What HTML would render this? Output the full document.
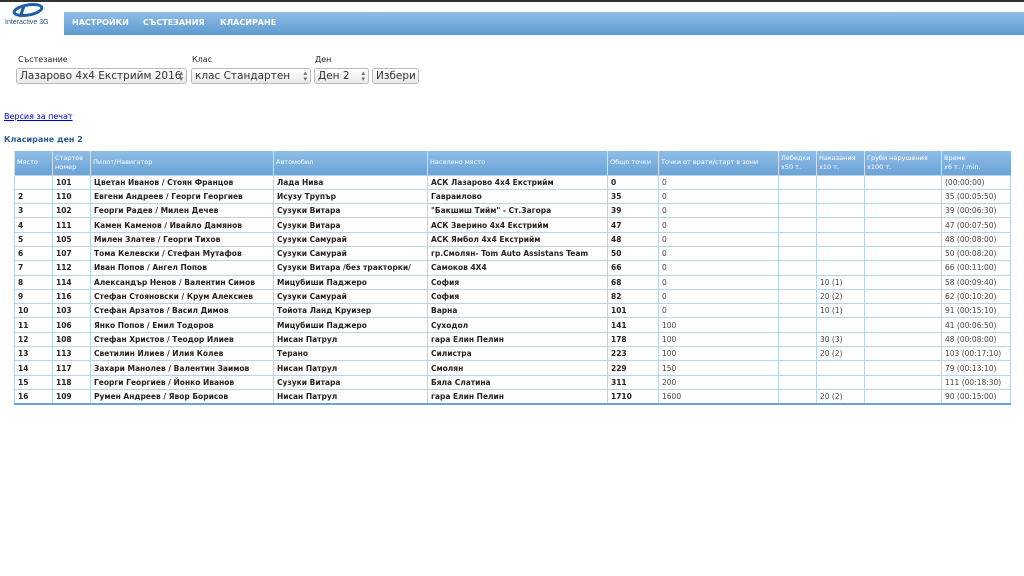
<!DOCTYPE html>
<html><head><meta charset="utf-8"><style>
*{box-sizing:border-box}
body{margin:0;width:1024px;height:576px;background:#fff;font-family:"DejaVu Sans","Liberation Sans",sans-serif;overflow:hidden;position:relative;color:#222}
.top{position:absolute;left:0;top:0;width:1024px;height:2px;background:#333}
.nav{position:absolute;left:64px;top:12px;width:960px;height:23px;background:linear-gradient(#8fbde6,#5d9ad0);}
.nav span{position:absolute;top:6px;color:#fff;font-weight:bold;font-size:8px}
.logo{position:absolute;left:4px;top:2px}
.lbl{position:absolute;font-size:8px;color:#222}
.sel{position:absolute;top:68px;height:16px;border:1px solid #bbb;border-radius:3px;background:linear-gradient(#fff,#e8e8e8);font-size:10.5px;padding:1px 3px;color:#333;white-space:nowrap;overflow:hidden}
.sel i{position:absolute;right:3px;top:1px;font-style:normal;font-size:7px;line-height:6px;color:#666;background:transparent}
a{position:absolute;left:4px;top:112px;font-size:8px;color:#00c;text-decoration:underline}
h4{position:absolute;left:4px;top:135px;margin:0;font-size:8px;color:#2a5b94;font-weight:bold}
table{position:absolute;left:14px;top:151px;width:996px;border-collapse:collapse;font-size:7.5px;table-layout:fixed}
th{background:linear-gradient(#8fbde6,#6aa3d6);color:#fff;font-weight:normal;text-align:left;height:24px;padding:0 2px;border-left:1px solid #cfe0f0;font-size:6.5px;line-height:9px;vertical-align:middle}
td{height:14.3px;padding:0 3px;border:1px solid #b8d3ec;white-space:nowrap;overflow:hidden;font-size:7.5px}
td.b{font-weight:bold}
td.n{color:#444}
tr:last-child td{border-bottom:2px solid #6aa3d6}
</style></head><body>
<div class="top"></div>
<svg class="logo" width="60" height="26" viewBox="0 0 60 26"><ellipse cx="24" cy="8" rx="14" ry="5" fill="none" stroke="#1d5ea6" stroke-width="3" transform="rotate(-10 24 8)"/><path d="M20 4 L16 15" stroke="#1d5ea6" stroke-width="3"/><text x="1" y="22" font-size="7" fill="#1d4f8a" font-family="Liberation Sans">Interactive 3G</text></svg>
<div class="nav"><span style="left:8px">НАСТРОЙКИ</span><span style="left:79px">СЪСТЕЗАНИЯ</span><span style="left:156px">КЛАСИРАНЕ</span></div>
<div class="lbl" style="left:18px;top:55px">Състезание</div>
<div class="lbl" style="left:192px;top:55px">Клас</div>
<div class="lbl" style="left:315px;top:55px">Ден</div>
<div class="sel" style="left:16px;width:171px">Лазарово 4х4 Екстрийм 2016<i>▴<br>▾</i></div>
<div class="sel" style="left:191px;width:120px">клас Стандартен<i>▴<br>▾</i></div>
<div class="sel" style="left:314px;width:55px">Ден 2<i>▴<br>▾</i></div>
<div class="sel" style="left:372px;width:47px">Избери</div>
<a>Версия за печат</a>
<h4>Класиране ден 2</h4>
<table>
<colgroup><col style="width:38px"><col style="width:38px"><col style="width:183px"><col style="width:154px"><col style="width:180px"><col style="width:51px"><col style="width:120px"><col style="width:38px"><col style="width:48px"><col style="width:77px"><col style="width:69px"></colgroup>
<tr><th>Място</th><th>Стартов<br>номер</th><th>Пилот/Навигатор</th><th>Автомобил</th><th>Населено място</th><th>Общо точки</th><th>Точки от врати/старт в зони</th><th>Лебедки<br>x50 т.</th><th>Наказания<br>x10 т.</th><th>Груби нарушения<br>x100 т.</th><th>Време<br>x6 т. / min.</th></tr>
<tr><td class="b"></td><td class="b">101</td><td class="b">Цветан Иванов / Стоян Францов</td><td class="b">Лада Нива</td><td class="b">АСК Лазарово 4х4 Екстрийм</td><td class="b">0</td><td class="n">0</td><td></td><td></td><td></td><td class="n">(00:00:00)</td></tr>
<tr><td class="b">2</td><td class="b">110</td><td class="b">Евгени Андреев / Георги Георгиев</td><td class="b">Исузу Трупър</td><td class="b">Гавраилово</td><td class="b">35</td><td class="n">0</td><td></td><td></td><td></td><td class="n">35 (00:05:50)</td></tr>
<tr><td class="b">3</td><td class="b">102</td><td class="b">Георги Радев / Милен Дечев</td><td class="b">Сузуки Витара</td><td class="b">"Бакшиш Тийм" - Ст.Загора</td><td class="b">39</td><td class="n">0</td><td></td><td></td><td></td><td class="n">39 (00:06:30)</td></tr>
<tr><td class="b">4</td><td class="b">111</td><td class="b">Камен Каменов / Ивайло Дамянов</td><td class="b">Сузуки Витара</td><td class="b">АСК Зверино 4х4 Екстрийм</td><td class="b">47</td><td class="n">0</td><td></td><td></td><td></td><td class="n">47 (00:07:50)</td></tr>
<tr><td class="b">5</td><td class="b">105</td><td class="b">Милен Златев / Георги Тихов</td><td class="b">Сузуки Самурай</td><td class="b">АСК Ямбол 4х4 Екстрийм</td><td class="b">48</td><td class="n">0</td><td></td><td></td><td></td><td class="n">48 (00:08:00)</td></tr>
<tr><td class="b">6</td><td class="b">107</td><td class="b">Тома Келевски / Стефан Мутафов</td><td class="b">Сузуки Самурай</td><td class="b">гр.Смолян- Tom Auto Assistans Team</td><td class="b">50</td><td class="n">0</td><td></td><td></td><td></td><td class="n">50 (00:08:20)</td></tr>
<tr><td class="b">7</td><td class="b">112</td><td class="b">Иван Попов / Ангел Попов</td><td class="b">Сузуки Витара /без тракторки/</td><td class="b">Самоков 4Х4</td><td class="b">66</td><td class="n">0</td><td></td><td></td><td></td><td class="n">66 (00:11:00)</td></tr>
<tr><td class="b">8</td><td class="b">114</td><td class="b">Александър Ненов / Валентин Симов</td><td class="b">Мицубиши Паджеро</td><td class="b">София</td><td class="b">68</td><td class="n">0</td><td></td><td class="n">10 (1)</td><td></td><td class="n">58 (00:09:40)</td></tr>
<tr><td class="b">9</td><td class="b">116</td><td class="b">Стефан Стояновски / Крум Алексиев</td><td class="b">Сузуки Самурай</td><td class="b">София</td><td class="b">82</td><td class="n">0</td><td></td><td class="n">20 (2)</td><td></td><td class="n">62 (00:10:20)</td></tr>
<tr><td class="b">10</td><td class="b">103</td><td class="b">Стефан Арзатов / Васил Димов</td><td class="b">Тойота Ланд Круизер</td><td class="b">Варна</td><td class="b">101</td><td class="n">0</td><td></td><td class="n">10 (1)</td><td></td><td class="n">91 (00:15:10)</td></tr>
<tr><td class="b">11</td><td class="b">106</td><td class="b">Янко Попов / Емил Тодоров</td><td class="b">Мицубиши Паджеро</td><td class="b">Суходол</td><td class="b">141</td><td class="n">100</td><td></td><td></td><td></td><td class="n">41 (00:06:50)</td></tr>
<tr><td class="b">12</td><td class="b">108</td><td class="b">Стефан Христов / Теодор Илиев</td><td class="b">Нисан Патрул</td><td class="b">гара Елин Пелин</td><td class="b">178</td><td class="n">100</td><td></td><td class="n">30 (3)</td><td></td><td class="n">48 (00:08:00)</td></tr>
<tr><td class="b">13</td><td class="b">113</td><td class="b">Светилин Илиев / Илия Колев</td><td class="b">Терано</td><td class="b">Силистра</td><td class="b">223</td><td class="n">100</td><td></td><td class="n">20 (2)</td><td></td><td class="n">103 (00:17:10)</td></tr>
<tr><td class="b">14</td><td class="b">117</td><td class="b">Захари Манолев / Валентин Заимов</td><td class="b">Нисан Патрул</td><td class="b">Смолян</td><td class="b">229</td><td class="n">150</td><td></td><td></td><td></td><td class="n">79 (00:13:10)</td></tr>
<tr><td class="b">15</td><td class="b">118</td><td class="b">Георги Георгиев / Йонко Иванов</td><td class="b">Сузуки Витара</td><td class="b">Бяла Слатина</td><td class="b">311</td><td class="n">200</td><td></td><td></td><td></td><td class="n">111 (00:18:30)</td></tr>
<tr><td class="b">16</td><td class="b">109</td><td class="b">Румен Андреев / Явор Борисов</td><td class="b">Нисан Патрул</td><td class="b">гара Елин Пелин</td><td class="b">1710</td><td class="n">1600</td><td></td><td class="n">20 (2)</td><td></td><td class="n">90 (00:15:00)</td></tr>
</table>
</body></html>
